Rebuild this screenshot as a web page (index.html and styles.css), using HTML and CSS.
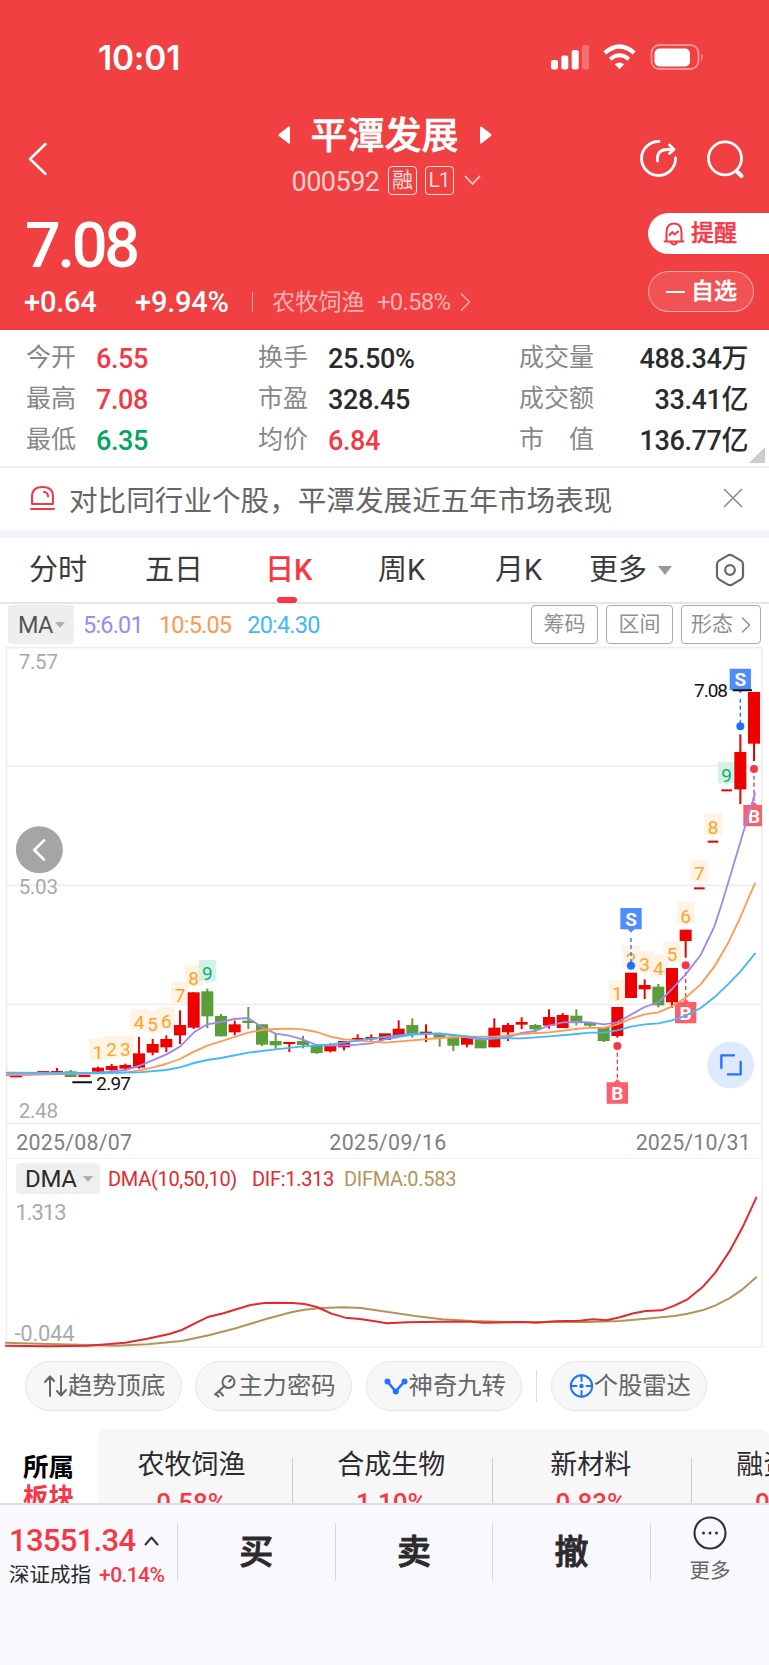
FILE: index.html
```html
<!DOCTYPE html>
<html lang="zh-CN">
<head>
    <meta charset="UTF-8">
    <meta name="viewport" content="width=device-width, initial-scale=1.0">
    <title>平潭发展 000592</title>
    <link rel="stylesheet" href="styles.css">
</head>
<body>
    <header class="header">
        <div class="status-bar">
            <span class="clock">10:01</span>
            <svg class="status-icons" width="156" height="28" viewBox="0 0 156 28">
                <g fill="#fff">
                    <rect x="1" y="16" width="7" height="9.5" rx="2"/>
                    <rect x="11.3" y="11.5" width="7" height="14" rx="2"/>
                    <rect x="21.7" y="6" width="7" height="19.5" rx="2"/>
                    <rect x="32" y="1" width="7" height="24.5" rx="2" opacity=".25"/>
                    <path d="M69.5 25.3l-4.8-5q4.8-3.6 9.6 0z"/>
                    <rect x="104.5" y="4.5" width="35.5" height="18" rx="5"/>
                    <path d="M151.3 9.5q2.8 3.5 0 7.5z" opacity=".5"/>
                </g>
                <g fill="none" stroke="#fff" stroke-linecap="butt">
                    <path d="M54.8 8.8q14.700-12.500 29.400 0" stroke-width="4.300"/>
                    <path d="M60.200 15.200q9.300-7.800 18.600 0" stroke-width="4"/>
                    <rect x="101.500" y="1" width="47" height="24" rx="8" stroke-width="1.800" opacity=".45"/>
                </g>
            </svg>
        </div>

        <div class="nav">
            <svg class="back" width="20" height="34" viewBox="0 0 20 34"><path d="M17.500 2L2 17l15.500 15"/></svg>
            <div class="title">
                <div class="title-name">
                    <svg width="13" height="20" viewBox="0 0 13 20"><path d="M12 2v16q-1 1-2 0L1 11q-1-1 0-2l9-7q1-1 2 0z"/></svg>
                    <h1>平潭发展</h1>
                    <svg width="13" height="20" viewBox="0 0 13 20"><path d="M1 2v16q1 1 2 0l9-7q1-1 0-2L3 2q-1-1-2 0z"/></svg>
                </div>
                <div class="title-code">
                    <span class="code">000592</span>
                    <span class="badge">融</span>
                    <span class="badge">L1</span>
                    <svg width="17" height="11" viewBox="0 0 17 11"><path d="M1.500 1.500l7 7.500 7-7.500"/></svg>
                </div>
            </div>
            <div class="nav-icons">
                <svg width="40" height="40" viewBox="0 0 40 40"><path d="M20 2.500A17 17 0 1 0 36.500 19M18.500 22v-3q0-8.500 10-8.500h5M30.500 6l4.500 4.500-4.500 4"/></svg>
                <svg width="40" height="40" viewBox="0 0 40 40"><circle cx="19" cy="19.300" r="16.500"/><path d="M30.500 32l5 5" stroke-width="4"/></svg>
            </div>
        </div>

        <div class="quote">
            <div>
                <div class="price">7.08</div>
                <div class="change">
                    <span class="diff">+0.64</span>
                    <span class="percent">+9.94%</span>
                    <span class="sector">农牧饲渔</span>
                    <span class="sector-change">+0.58%</span>
                    <svg width="11" height="20" viewBox="0 0 11 20"><path d="M1.500 2l8 8-8 8"/></svg>
                </div>
            </div>
            <div class="quote-actions">
                <div class="pill remind">
                    <svg width="22" height="24" viewBox="0 0 22 24"><path d="M1.500 19.500h19M3.500 19v-8.500q0-9 7.500-9t7.500 9V19M7.500 20q3.500 5 7 0M6.500 13l3-3 2 2.500 3.500-3"/></svg>
                    提醒
                </div>
                <div class="pill watch"><i></i>自选</div>
            </div>
        </div>
    </header>

    <section class="stats">
        <span class="label">今开</span><span class="up">6.55</span>
        <span class="label">换手</span><span>25.50%</span>
        <span class="label">成交量</span><span class="right">488.34万</span>
        <span class="label">最高</span><span class="up">7.08</span>
        <span class="label">市盈</span><span>328.45</span>
        <span class="label">成交额</span><span class="right">33.41亿</span>
        <span class="label">最低</span><span class="down">6.35</span>
        <span class="label">均价</span><span class="up">6.84</span>
        <span class="label wide"><b>市</b><b>值</b></span><span class="right">136.77亿</span>
        <i class="corner"></i>
    </section>

    <section class="banner">
        <svg width="25" height="26" viewBox="0 0 25 26"><path d="M2 19v-7.500Q2 2 12.500 2T23 11.500V19zM1 24h23M14 7q4 .5 4 4.500"/></svg>
        <span>对比同行业个股，平潭发展近五年市场表现</span>
        <svg class="close" width="20" height="20" viewBox="0 0 20 20"><path d="M1.500 1.500l17 17M18.500 1.500l-17 17"/></svg>
    </section>

    <nav class="tabs">
        <span>分时</span>
        <span>五日</span>
        <span class="active">日K</span>
        <span>周K</span>
        <span>月K</span>
        <span>更多</span>
        <i class="tri"></i>
        <svg width="30" height="34" viewBox="0 0 30 34"><path d="M12.500 2.600q2.500-1.400 5 0l8.500 5q2 1.200 2 3.600v11.600q0 2.400-2 3.600l-8.500 5q-2.500 1.400-5 0l-8.500-5q-2-1.200-2-3.600V11.200q0-2.400 2-3.600z"/><circle cx="15" cy="17" r="4.800"/></svg>
    </nav>

    <div class="ma-row">
        <span class="ma-select">MA<i class="tri"></i></span>
        <span class="ma5">5:6.01</span>
        <span class="ma10">10:5.05</span>
        <span class="ma20">20:4.30</span>
        <div class="ma-buttons">
            <span>筹码</span>
            <span>区间</span>
            <span>形态<svg width="10" height="18" viewBox="0 0 10 18"><path d="M1.500 2l7 7-7 7"/></svg></span>
        </div>
    </div>

    <!-- three chart units to one pixel -->
    <svg class="kline" width="769" height="512" viewBox="0 -762 2307 1536">
        <path class="grid" d="M19.500-757H2285.500M19.500-402H2285.500M19.500-44H2285.500M19.500 313H2285.500M19.500 670H2285.500M19.500 774V-757M2285.500 774V-757"/>
        <g class="axis">
            <text x="56" y="-693" textLength="118">7.57</text>
            <text x="56" y="-19" textLength="118">5.03</text>
            <text x="56" y="655" textLength="118">2.48</text>
        </g>
        <g class="dates">
            <text x="49" y="749" textLength="347">2025/08/07</text>
            <text x="988" y="749" textLength="351">2025/09/16</text>
            <text x="1907" y="749" textLength="345">2025/10/31</text>
        </g>
        <g id="tags"></g>
        <g id="candles"></g>
        <g id="signals"></g>
        <g class="lines">
            <polyline class="ma5" points="20,526 293,519 375,510 416,498 457,481 498,464 540,440 582,397 622,373 663,366 703,357 745,354 786,382 827,401 868,407 909,419 950,435 991,437 1032,436 1073,434 1114,430 1155,418 1237,404 1319,401 1401,412 1445,419 1524,411 1565,399 1606,393 1647,377 1688,367 1729,366 1770,367 1811,373 1852,367 1893,344 1934,321 1975,307 2016,267 2057,223 2102,165 2143,80 2169,0 2265,-320"/>
            <polyline class="ma10" points="20,522 293,520 375,517 416,512 457,503 498,492 540,477 582,455 622,437 663,424 703,411 745,398 786,390 827,387 868,386 909,388 950,396 991,410 1032,418 1073,421 1114,425 1155,428 1237,421 1319,414 1401,410 1483,410 1565,402 1647,397 1729,387 1770,383 1811,384 1852,373 1893,356 1934,343 1975,337 2016,319 2057,293 2102,253 2143,200 2184,130 2221,52 2243,0 2265,-50"/>
            <polyline class="ma20" points="20,518 293,519 416,517 498,510 540,502 582,489 622,480 663,474 745,458 827,448 909,439 991,434 1032,428 1073,422 1114,416 1155,411 1237,402 1319,400 1401,409 1445,415 1565,415 1647,409 1729,402 1770,398 1811,398 1852,391 1893,380 1934,373 1975,370 2016,361 2057,347 2102,324 2143,292 2184,253 2221,215 2265,161"/>
        </g>
        <g class="extremes">
            <path d="M2198-629h58M217 547h59"/>
            <text x="2082" y="-608" textLength="102">7.08</text>
            <text x="289" y="570" textLength="104">2.97</text>
        </g>
        <circle cx="118" cy="-151" r="70.500" fill="#a5a5a5"/>
        <path class="prev" d="M132-179l-29 29 29 29"/>
        <circle cx="2192" cy="495" r="70.500" fill="#dfeaff"/>
        <path class="expand" d="M2164 504v-38h38M2222 486v37h-38"/>
    </svg>

    <section class="dma">
        <div class="dma-row">
            <span class="dma-select">DMA<i class="tri"></i></span>
            <span class="dma-args">DMA(10,50,10)</span>
            <span class="dif">DIF:1.313</span>
            <span class="difma">DIFMA:0.583</span>
        </div>
        <svg width="769" height="154" viewBox="0 1194 769 154">
            <path class="grid" d="M6.500 1194V1347.300H761.800V1194"/>
            <g class="axis">
                <text x="15.500" y="1220" textLength="51">1.313</text>
                <text x="14.500" y="1341" textLength="60">-0.044</text>
            </g>
            <g class="lines" transform="translate(0 1150) scale(.4911 .3333)">
                <polyline class="difma" points="12,578 100,582 180,585 235,587 300,583 370,573 425,556 480,535 540,508 595,486 620,479 655,474 700,472 735,474 780,484 845,498 900,508 960,513 1040,516 1200,516 1262,513 1315,506 1373,498 1400,491 1430,481 1457,466 1485,445 1512,418 1540,382"/>
                <polyline class="dif" points="12,587 100,589 180,587 255,578 300,566 345,552 370,540 397,520 425,500 455,490 483,477 510,465 538,459 565,458 595,459 620,462 645,471 675,491 703,503 733,507 760,513 788,520 830,517 900,515 960,515 985,518 1062,516 1092,518 1130,514 1180,512 1207,508 1235,511 1262,502 1290,490 1315,483 1347,481 1373,467 1400,448 1430,412 1457,367 1485,305 1512,232 1540,143"/>
            </g>
        </svg>
    </section>

    <div class="chips">
        <span class="chip"><svg width="25" height="24" viewBox="0 0 25 24"><path d="M7 22V3M2 8l5-5.500M18 2v19M23 16l-5 5.500M7 2.500l4 4.500M18 21.500l-4-4.500"/></svg>趋势顶底</span>
        <span class="chip"><svg width="25" height="24" viewBox="0 0 25 24"><circle cx="15.500" cy="8" r="6"/><path d="M11.500 12L2 20.500M6 17l4 4.500M3 20l2.500 2.500M16 7.500l2-2"/></svg>主力密码</span>
        <span class="chip"><svg class="blue" width="25" height="24" viewBox="0 0 25 24"><path d="M3.500 7.500l8 10 9-10" stroke-width="2.600"/><g fill="#2273ff" stroke="none"><circle cx="3.500" cy="7.500" r="3"/><circle cx="20.500" cy="7.500" r="3"/><circle cx="11.800" cy="17.500" r="3"/></g></svg>神奇九转</span>
        <i class="chip-divider"></i>
        <span class="chip"><svg class="blue" width="25" height="24" viewBox="0 0 25 24"><circle cx="12.500" cy="12" r="10.700"/><path d="M12.500 1.500v5.500M12.500 17v5.500M2 12h5.500M17.500 12h5.500"/><circle cx="12.500" cy="12" r="1.200" fill="#2273ff"/></svg>个股雷达</span>
    </div>

    <section class="boards">
        <div class="boards-label">所属<em>板块</em></div>
        <div class="boards-list">
            <div class="board">农牧饲渔<em>0.58%</em></div>
            <div class="board">合成生物<em>1.10%</em></div>
            <div class="board">新材料<em>0.83%</em></div>
            <div class="board">融资融券<em>0.58%</em></div>
        </div>
    </section>

    <footer class="footer">
        <div class="index">
            <div class="index-value">13551.34<svg width="15" height="11" viewBox="0 0 15 11"><path d="M1.500 9.500l6-7 6 7"/></svg></div>
            <div class="index-name">深证成指 <em>+0.14%</em></div>
        </div>
        <div class="trade">买</div>
        <div class="trade">卖</div>
        <div class="trade">撤</div>
        <div class="more">
            <svg width="34" height="34" viewBox="0 0 34 34"><circle cx="17" cy="17" r="15.500"/><path d="M10.500 17h.01M17 17h.01M23.500 17h.01" stroke-width="3"/></svg>
            更多
        </div>
    </footer>

    <script>
        // [direction, body top, body bottom, wick top, wick bottom]
        const candles = [
            ['r', 526, 532], ['g', 518, 522], ['r', 513, 518], ['r', 513, 520, 504, 520], ['g', 514, 531, 510, 531],
            ['r', 524, 531], ['r', 503, 515, 500, 518], ['r', 498, 510, 492, 515], ['r', 495, 506, 491, 512],
            ['r', 460, 503, 411, 506], ['r', 432, 458, 417, 466], ['r', 417, 442, 406, 456], ['r', 375, 406, 331, 432],
            ['r', 277, 383, 277, 387], ['g', 274, 349, 266, 384], ['g', 348, 409, 342, 409], ['r', 373, 397, 362, 406],
            ['g', 362, 369, 321, 387], ['g', 373, 434, 373, 438], ['g', 423, 436, 402, 448], ['r', 426, 432, 426, 456],
            ['g', 423, 435, 408, 445], ['g', 435, 459, 435, 462], ['r', 434, 454, 430, 457], ['r', 423, 442, 423, 451],
            ['r', 414, 420, 403, 425], ['r', 411, 418, 403, 422], ['r', 400, 420], ['r', 386, 410, 361, 410],
            ['g', 375, 405, 355, 413], ['r', 395, 402, 373, 426], ['g', 402, 413, 402, 440], ['g', 410, 437, 410, 453],
            ['r', 410, 434, 410, 442], ['g', 418, 445], ['r', 383, 442, 355, 442], ['r', 375, 397, 369, 423],
            ['r', 366, 374, 352, 387], ['g', 375, 388, 372, 397], ['r', 351, 377, 328, 386], ['r', 345, 384, 339, 384],
            ['g', 347, 367, 328, 376], ['g', 369, 377, 369, 383], ['g', 381, 423, 381, 426], ['r', 321, 408, 321, 413],
            ['r', 218, 294], ['r', 255, 268, 238, 297], ['g', 260, 316, 252, 322], ['r', 204, 307, 204, 323],
            ['r', 89, 123, 89, 173], ['r', -38, -32], ['r', -178, -172], ['r', -332, -326],
            ['r', -444, -332, -497, -288], ['r', -624, -469, -624, -417]
        ];

        // [candle, number, top]
        const tags = [
            [6, 1, 416], [7, 2, 407], [8, 3, 407], [9, 4, 326], [10, 5, 332], [11, 6, 322], [12, 7, 246], [13, 8, 194], [14, 9, 180],
            [44, 1, 240], [45, 2, 137], [46, 3, 152], [47, 4, 165], [48, 5, 122], [49, 6, 7], [50, 7, -120], [51, 8, -260], [52, 9, -415]
        ];

        // [candle, type, box top, dot y]
        const signals = [[44, 'B', 547, 438], [45, 'S', 24, 197], [49, 'B', 306, 196], [53, 'S', -694, -521], [54, 'B', -285, -393]];

        const candleX = i => 48 + 41 * i;

        document.getElementById('candles').innerHTML = candles.map(([dir, top, bottom, high, low], i) => {
            const x = candleX(i);
            const w = i >= 50 && i <= 52 ? 32 : 36;
            const wick = high === undefined ? '' : `<rect x="${x - 3}" y="${high}" width="6" height="${low - high}"/>`;
            return `<g class="${dir}">${wick}<rect x="${x - w / 2}" y="${top}" width="${w}" height="${bottom - top}"/></g>`;
        }).join('');

        document.getElementById('tags').innerHTML = tags.map(([i, n, top]) => {
            const x = candleX(i);
            return `<g class="tag${n === 9 ? ' nine' : ''}"><path d="M${x - 26} ${top}h53v64h-20l-7 7-7-7h-19z"/>
                <text x="${x}" y="${top + 61}">${n}</text></g>`;
        }).join('');

        document.getElementById('signals').innerHTML = signals.map(([i, type, top, dot]) => {
            const x = candleX(i);
            const right = Math.min(x + 32, 2286);
            const sell = type === 'S';
            const tip = sell ? `M${x - 10} ${top + 64}l10 10 10-10` : `M${x - 10} ${top}l10-10 10 10`;
            const from = sell ? top + 90 : dot + 20;
            const to = sell ? dot : top - 10;
            return `<g class="${sell ? 'sell' : 'buy'}"><path class="stem" d="M${x} ${from}V${to}"/>
                <circle cx="${x}" cy="${dot}" r="12"/>
                <path class="box" d="M${x - 32} ${top}H${right}v64H${x - 32}z${tip}"/>
                <text x="${x}" y="${top + 53}">${type}</text></g>`;
        }).join('');
    </script>
</body>
</html>
```
FILE: styles.css
```css
:root {
    --red: #f73745;
    --header: #f04042;
    --green: #00a85a;
    --text: #2b2b2e;
    --gray: #888;
}

* {
    box-sizing: border-box;
}

body {
    margin: 0;
    width: 769px;
    height: 1665px;
    overflow: hidden;
    background: #fff;
    color: var(--text);
    font-family: Roboto, "Noto Sans CJK SC", sans-serif;
}

svg {
    display: block;
    flex: none;
    fill: none;
    stroke-linecap: round;
    stroke-linejoin: round;
}

svg text {
    stroke: none;
}

em, i, b {
    font-style: normal;
    font-weight: inherit;
}

.tri {
    flex: none;
    border: 7px solid transparent;
    border-top: 9px solid #999;
    border-bottom: 0;
}

/* header */
.header {
    height: 330px;
    background: var(--header);
    color: #fff;
}

.status-bar {
    display: flex;
    justify-content: space-between;
    height: 112px;
    padding: 44px 63px 0 98px;
}

.clock {
    font: 600 33.500px/28px Inter, sans-serif;
    letter-spacing: -0.2px;
}

.nav {
    display: grid;
    grid-template-columns: 150px 1fr 150px;
    height: 96px;
}

.back {
    margin: 30px 0 0 28px;
    stroke: #fff;
    stroke-width: 2.500;
}

.title-name {
    display: flex;
    justify-content: center;
    align-items: center;
    gap: 20px;
    height: 46px;
}

.title-name svg {
    fill: #fff;
}

.title-name h1 {
    margin: 0;
    padding-top: 3px;
    font-size: 37px;
    font-weight: 500;
    line-height: 43px;
    -webkit-text-stroke: 0.6px;
}

.title-code {
    display: flex;
    align-items: center;
    justify-content: center;
    gap: 8px;
    height: 44px;
    padding-left: 3px;
    color: rgba(255, 255, 255, .75);
}

.title-code svg {
    margin-left: 2px;
    stroke: currentColor;
    stroke-width: 1.800;
}

.code {
    padding-top: 3px;
    font-size: 27px;
    letter-spacing: -0.5px;
}

.badge {
    width: 29px;
    height: 29px;
    border: 1.500px solid currentColor;
    border-radius: 4px;
    font-size: 21px;
    line-height: 27px;
    text-align: center;
    letter-spacing: -1px;
    color: rgba(255, 255, 255, .85);
}

.nav-icons {
    display: flex;
    gap: 27px;
    padding: 27px 0 0 20px;
    stroke: #fff;
    stroke-width: 2.800;
}

.quote {
    display: flex;
    justify-content: space-between;
    padding-left: 25px;
}

.price {
    height: 73px;
    font-size: 63px;
    font-weight: 500;
    line-height: 76px;
    letter-spacing: -3.300px;
}

.change {
    display: flex;
    align-items: center;
    height: 42px;
    font-size: 29px;
    font-weight: 500;
    letter-spacing: -0.2px;
}

.diff {
    width: 111px;
    margin-left: -1px;
}

.percent {
    width: 117px;
}

.sector, .sector-change, .change svg {
    color: rgba(255, 255, 255, .6);
    font-weight: 400;
}

.sector {
    width: 125px;
    padding-left: 19px;
    border-left: 1px solid rgba(255, 255, 255, .5);
    font-size: 23.200px;
    line-height: 20px;
    letter-spacing: 0;
}

.sector-change {
    width: 83px;
    font-size: 24px;
    letter-spacing: -0.8px;
}

.change svg {
    stroke: currentColor;
    stroke-width: 1.500;
}

.quote-actions {
    width: 121px;
    padding-top: 5px;
}

.pill {
    display: flex;
    align-items: center;
    gap: 6px;
    height: 41px;
    padding-left: 15px;
    border-radius: 21px;
    font-size: 23px;
    font-weight: 500;
    line-height: 37px;
    -webkit-text-stroke: 0.4px;
}

.remind {
    border-radius: 21px 0 0 21px;
    background: #fff;
    color: var(--red);
    stroke: var(--red);
    stroke-width: 2;
}

.watch {
    width: 106px;
    margin-top: 17px;
    border: 1px solid rgba(255, 255, 255, .5);
    background: rgba(255, 255, 255, .1);
}

.watch i {
    width: 19px;
    height: 2px;
    margin-left: 2px;
    background: #fff;
}

/* figures */
.stats {
    position: relative;
    display: grid;
    grid-template-columns: 70px 162px 70px 191px 100px 129px;
    grid-auto-rows: 41px;
    height: 138px;
    padding: 9px 0 0 26px;
    border-bottom: 2px solid #f0f0f0;
    font-size: 27px;
    font-weight: 500;
    line-height: 41px;
    letter-spacing: -0.4px;
}

.stats .label {
    height: 36px;
    color: var(--gray);
    font-size: 25px;
    font-weight: 400;
    line-height: 38px;
    letter-spacing: 0;
}

.stats .wide {
    display: flex;
    justify-content: space-between;
    width: 75px;
}

.right {
    text-align: right;
}

.up {
    color: var(--red);
}

.down {
    color: var(--green);
}

.corner {
    position: absolute;
    right: 4px;
    bottom: 3px;
    border-left: 16px solid transparent;
    border-bottom: 16px solid #ccc;
}

.banner {
    display: flex;
    align-items: center;
    gap: 14px;
    height: 70px;
    padding: 0 26px 2px 30px;
    border-bottom: 8px solid #f2f4f9;
    color: #666;
    font-size: 28.600px;
    stroke: var(--red);
    stroke-width: 2;
}

.banner .close {
    margin-left: auto;
    stroke: #888;
    stroke-width: 1.500;
}

.tabs {
    display: flex;
    align-items: center;
    height: 66px;
    padding-left: 29px;
    border-bottom: 2px solid #e6e6e6;
    color: #3b3b3e;
    font-size: 29px;
    line-height: 65px;
}

.tabs span {
    width: 116px;
}

.tabs span:nth-child(3) {
    width: 113px;
    margin-left: 4px;
}

.tabs span:nth-child(4) {
    width: 117px;
}

.tabs span:nth-child(5) {
    width: 94px;
}

.tabs span:nth-child(6) {
    width: 69px;
}

.tabs .active {
    position: relative;
    color: var(--red);
    font-weight: 500;
}

.tabs .active::after {
    content: "";
    position: absolute;
    left: 12px;
    bottom: 0;
    width: 20px;
    height: 6px;
    border-radius: 3px;
    background: var(--red);
}

.tabs svg {
    margin-left: 43px;
    stroke: #666;
    stroke-width: 2.200;
}

.ma-row {
    display: flex;
    height: 42px;
    padding: 1px 8px 2px;
    font-size: 23.500px;
    line-height: 40px;
    letter-spacing: -0.8px;
}

.ma-row > span {
    margin-right: 16px;
}

.ma-row .ma-select {
    display: flex;
    align-items: center;
    gap: 3px;
    width: 66px;
    margin-right: 9px;
    padding-left: 10px;
    border-radius: 4px;
    background: #eee;
    color: #555;
}

.ma-select .tri, .dma-select .tri {
    border-width: 6px 5px 0;
    border-top-color: #b0b0b0;
}

.ma5 { color: #a087f0; stroke: #a087f0; }
.ma10 { color: #ff9a50; stroke: #ff9a50; }
.ma20 { color: #42b8fc; stroke: #42b8fc; }

.ma-buttons {
    display: flex;
    gap: 8px;
    margin-left: auto;
}

.ma-buttons span {
    display: flex;
    align-items: center;
    justify-content: center;
    gap: 8px;
    width: 67px;
    border: 1.500px solid #aaa;
    border-radius: 4px;
    color: #909090;
    font-size: 21px;
    line-height: 35px;
    letter-spacing: 0;
}

.ma-buttons span:last-child {
    width: 80px;
}

.ma-buttons svg {
    stroke: #909090;
    stroke-width: 1.500;
}

/* charts */
.grid {
    stroke: #eee;
    stroke-width: 5;
}

.axis {
    fill: #aaa;
    font-size: 62px;
}

.dates {
    fill: #808080;
    font-size: 64px;
}

.lines {
    stroke-width: 5.500;
}

.r { fill: #ee0000; }
.g { fill: #5a9e3a; }

.tag {
    fill: #fff3e5;
    text-anchor: middle;
}

.tag text {
    fill: #ffa426;
    font-size: 57px;
}

.nine {
    fill: #d5f1e6;
}

.nine text {
    fill: #0bb069;
}

.sell { fill: #1f6fff; stroke: #1f6fff; }
.buy { fill: #f73745; stroke: #f73745; }

.sell circle, .buy circle, .box {
    stroke: none;
}

.stem {
    stroke-width: 4;
    stroke-dasharray: 12 9;
    stroke-linecap: butt;
}

.sell .box { fill: #4f8dff; }
.buy .box { fill: #fb5f6b; }

.sell text, .buy text {
    fill: #fff;
    font-size: 57px;
    font-weight: 700;
    text-anchor: middle;
}

.extremes {
    fill: #111;
    font-size: 57px;
}

.extremes path {
    stroke: #111;
    stroke-width: 6;
    stroke-linecap: butt;
}

.prev {
    stroke: #fff;
    stroke-width: 8;
}

.expand {
    stroke: #2273ff;
    stroke-width: 7;
}

.dma .grid {
    stroke-width: 1.700;
}

.dma .axis {
    font-size: 22px;
}

.dma .lines polyline {
    stroke-width: 2;
    vector-effect: non-scaling-stroke;
}

.dma-row {
    display: flex;
    height: 36px;
    margin: 0 6px;
    padding: 4px 10px 0;
    border: 1.700px solid #eee;
    border-bottom: 0;
    font-size: 20px;
    line-height: 32px;
    letter-spacing: -0.3px;
}

.dma-select {
    display: flex;
    align-items: center;
    gap: 6px;
    width: 84px;
    height: 31px;
    margin: 0 8px 0 -1px;
    padding-left: 9px;
    border-radius: 4px;
    background: #efefef;
    font-size: 24px;
}

.dma-args {
    width: 144px;
}

.dma-row .dif {
    width: 92px;
}

.dma-args, .dif {
    color: #e5282d;
    stroke: #e5282d;
}

.dma .difma {
    color: #b4935a;
    stroke: #b4935a;
}

/* tools and boards */
.chips {
    display: flex;
    gap: 13.800px;
    padding: 13px 25px 18px;
}

.chip {
    display: flex;
    align-items: center;
    width: 156.500px;
    height: 50px;
    padding-left: 17px;
    border: 1px solid #e6e6e6;
    border-radius: 25px;
    background: #f7f7f7;
    color: #666;
    font-size: 24.300px;
    line-height: 48px;
    white-space: nowrap;
}

.chip svg {
    stroke: #666;
    stroke-width: 2;
}

.chip .blue {
    stroke: #2273ff;
}

.chip-divider {
    width: 1px;
    height: 32px;
    margin-top: 9px;
    background: #ddd;
}

.boards {
    display: flex;
    height: 74px;
    overflow: hidden;
}

.boards-label {
    flex: none;
    width: 98px;
    padding: 23px 0 0 23px;
    color: #000;
    font-size: 25.500px;
    font-weight: 700;
    line-height: 30px;
}

.boards em {
    display: block;
    color: var(--red);
}

.boards-list {
    display: flex;
    flex: none;
    width: 671px;
    overflow: hidden;
    border-radius: 8px 8px 0 0;
    background: #f7f7f7;
}

.board {
    flex: none;
    width: 199.500px;
    height: 120px;
    padding: 17px 3px 0 0;
    background: linear-gradient(#ccc, #ccc) right 29px / 1px 60px no-repeat;
    font-size: 27px;
    line-height: 38px;
    text-align: center;
}

.board:first-child {
    width: 195px;
    padding-right: 8px;
}

.board em {
    font-size: 26px;
    font-weight: 500;
    line-height: 38px;
}

/* bottom bar */
.footer {
    display: flex;
    height: 162px;
    padding-top: 18px;
    border-top: 2px solid #dedee2;
    background: #f9f9fd;
}

.footer > div {
    height: 58px;
}

.index {
    width: 177px;
    padding-left: 9px;
    white-space: nowrap;
}

.index-value {
    display: flex;
    align-items: center;
    gap: 9px;
    height: 35px;
    color: var(--red);
    font-size: 31px;
    font-weight: 500;
    letter-spacing: -0.7px;
}

.index-value svg {
    stroke: #333;
    stroke-width: 2;
}

.index-name {
    font-size: 20.500px;
    line-height: 35px;
}

.index-name em {
    margin-left: 3px;
    color: var(--red);
    font-size: 21px;
    font-weight: 500;
    letter-spacing: -0.6px;
}

.trade {
    width: 157.600px;
    border-left: 1px solid #d8d8dc;
    font-size: 34px;
    font-weight: 500;
    line-height: 59px;
    text-align: center;
    -webkit-text-stroke: 0.9px;
}

.more {
    display: flex;
    flex: 1;
    flex-direction: column;
    align-items: center;
    border-left: 1px solid #d8d8dc;
    color: #666;
    font-size: 20.500px;
    line-height: 42px;
}

.more svg {
    margin-top: -7px;
    stroke: #333;
    stroke-width: 2.200;
}
```
